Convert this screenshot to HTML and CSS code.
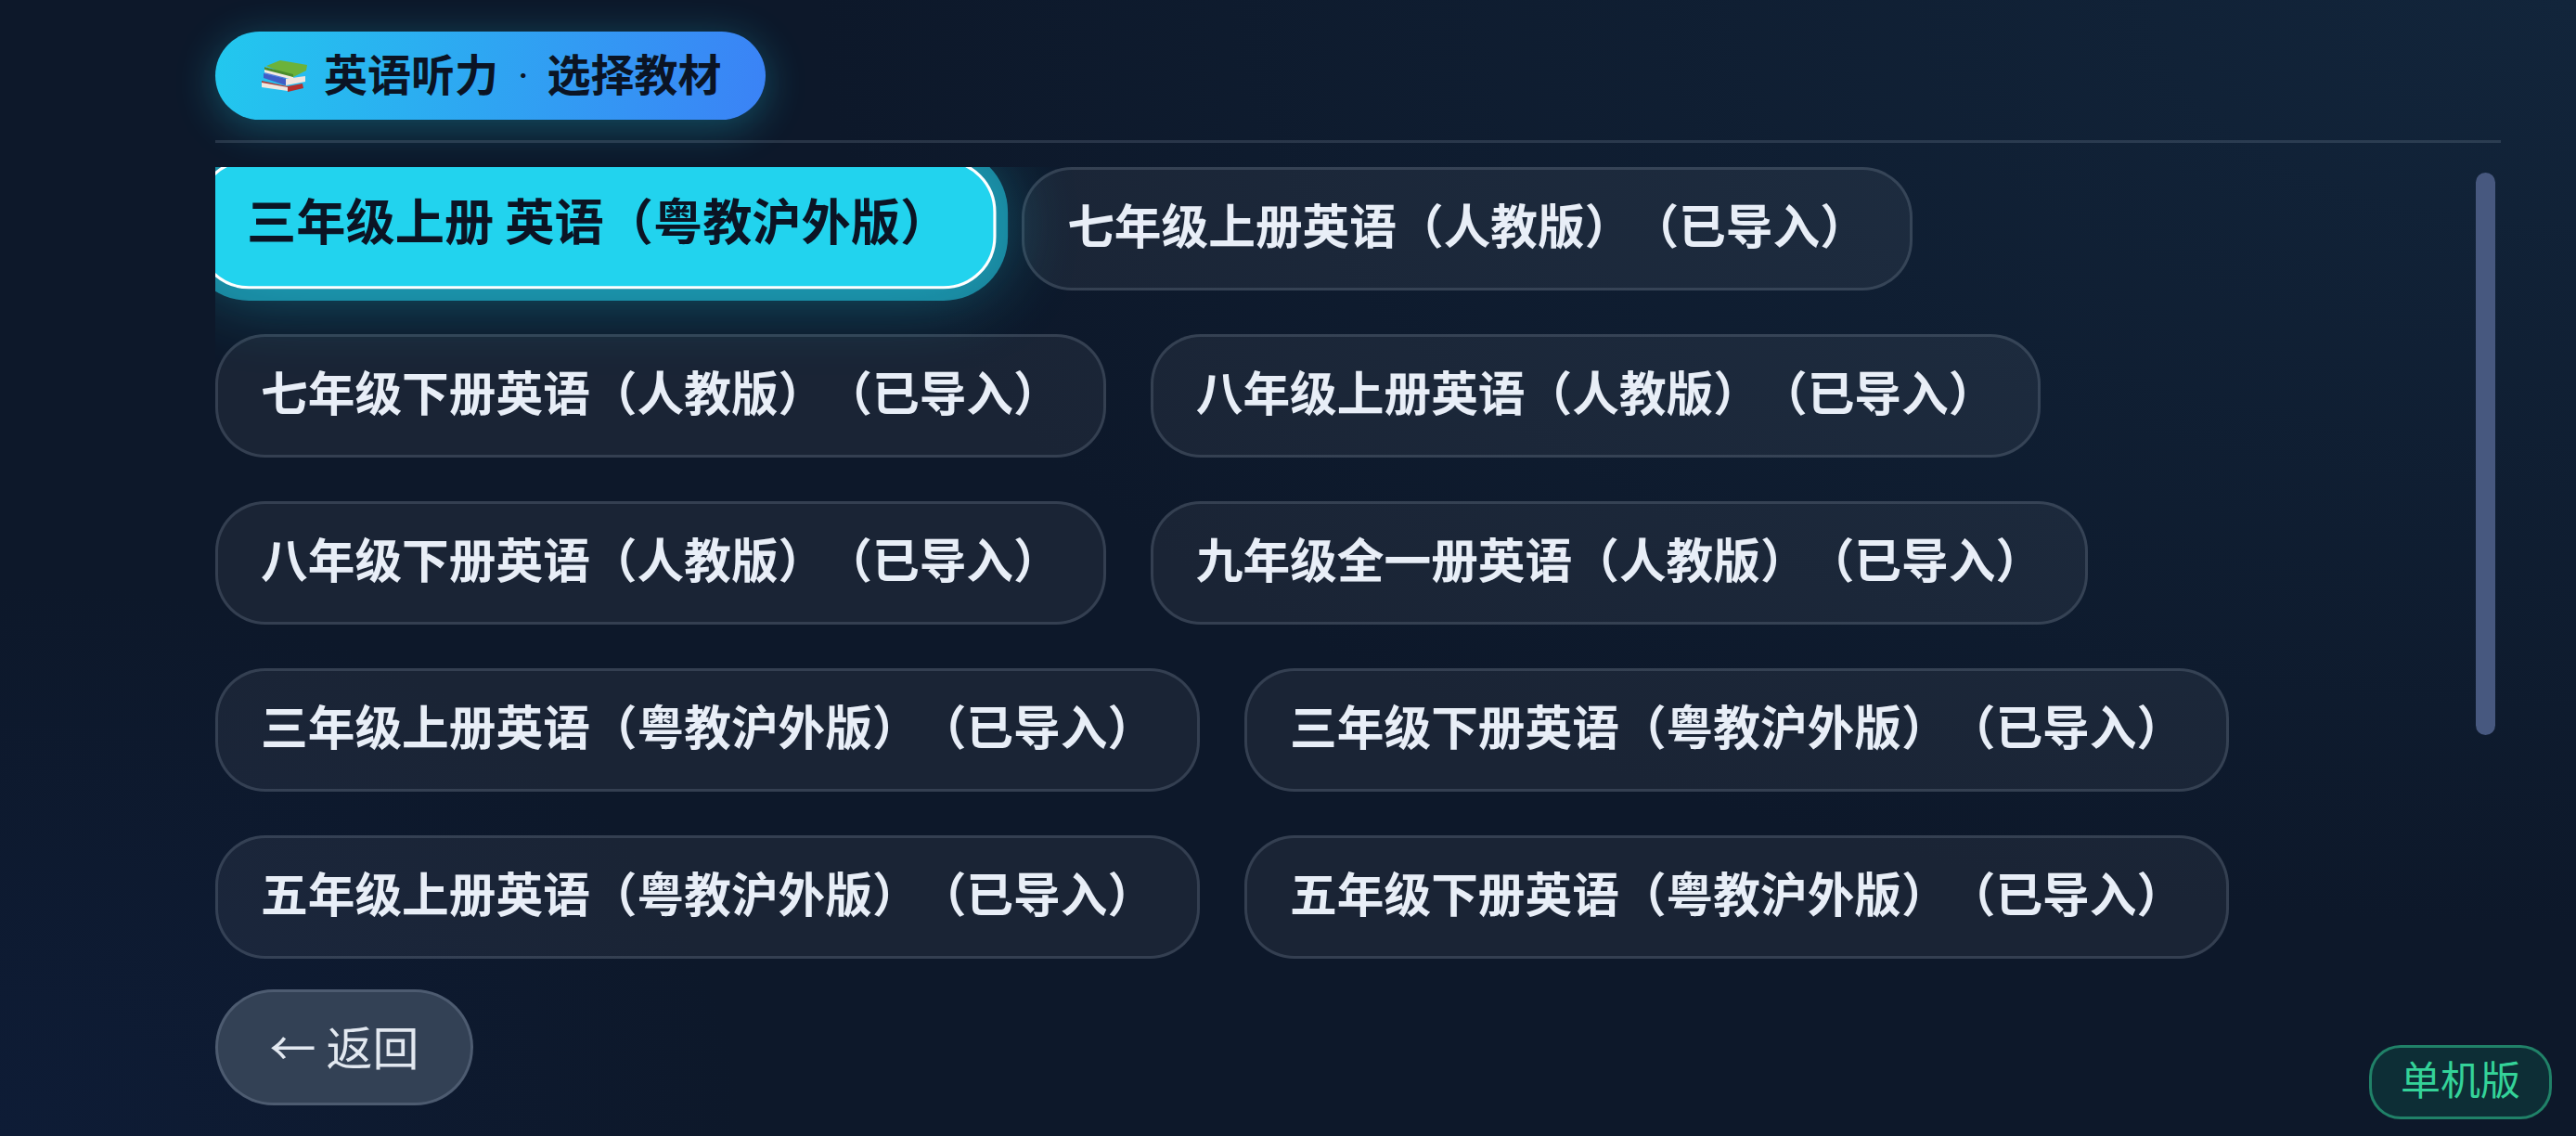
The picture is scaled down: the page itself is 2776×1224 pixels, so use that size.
FILE: index.html
```html
<!DOCTYPE html>
<html lang="zh-CN">
<head>
<meta charset="utf-8">
<title>英语听力</title>
<link rel="stylesheet" href="styles.css">
</head>
<body>
<main class="screen">
  <header class="head">
    <div class="title-pill">
      <svg class="books" viewBox="7 10 50 35" aria-hidden="true">
        <path d="M8 34l28 5 0 5-28-4z" fill="#efe7df"/>
        <path d="M8 33l28 6 0 1-28-5z" fill="#a8413c"/>
        <path d="M36 39l16-3 1 5-17 4z" fill="#b5302d"/>
        <path d="M33 31l22-3 0 6-21 4z" fill="#f0e6e0"/>
        <path d="M10 25l24 6 0 7-24-8z" fill="#3f5ec6"/>
        <path d="M10 25l8-2 16 4 0 4z" fill="#5b79dc"/>
        <path d="M11 18l31 9 0 5-31-8z" fill="#f1ebdf"/>
        <path d="M13 17l15-6 29 5-1 6-14 7z" fill="#6cb23a"/>
        <path d="M11 18l31 8 0 3-31-8z" fill="#4b8c2b"/>
      </svg>
      <span>英语听力 <span class="dot">·</span> 选择教材</span>
    </div>
  </header>
  <div class="rule"></div>
  <section class="list">
    <button class="book selected">三年级上册 英语（粤教沪外版）</button>
    <button class="book">七年级上册英语（人教版）（已导入）</button>
    <button class="book">七年级下册英语（人教版）（已导入）</button>
    <button class="book">八年级上册英语（人教版）（已导入）</button>
    <button class="book">八年级下册英语（人教版）（已导入）</button>
    <button class="book">九年级全一册英语（人教版）（已导入）</button>
    <button class="book">三年级上册英语（粤教沪外版）（已导入）</button>
    <button class="book">三年级下册英语（粤教沪外版）（已导入）</button>
    <button class="book">五年级上册英语（粤教沪外版）（已导入）</button>
    <button class="book">五年级下册英语（粤教沪外版）（已导入）</button>
    <div class="thumb"></div>
  </section>
  <button class="back">← 返回</button>
</main>
<div class="badge">单机版</div>
</body>
</html>
```
FILE: styles.css
```css
* { box-sizing: border-box; }
html, body { margin: 0; height: 100%; }
body {
  width: 2776px;
  height: 1224px;
  overflow: hidden;
  position: relative;
  font-family: "Noto Sans CJK SC", "Noto Sans", sans-serif;
  text-spacing-trim: space-all;
  background:
    radial-gradient(1900px 1000px at 100% 0%, #12253b 0%, rgba(18,37,59,0) 100%),
    radial-gradient(800px 600px at 0% 100%, #0e1c36 0%, rgba(14,28,54,0) 100%),
    #0d182a;
}
.screen {
  height: 1224px;
  padding: 34px 81px 0 232px;
  display: flex;
  flex-direction: column;
  align-items: stretch;
}
.head { display: flex; }
.title-pill {
  height: 95px;
  padding: 0 47px 9px 49px;
  display: flex;
  align-items: center;
  gap: 18px;
  border-radius: 48px;
  background: linear-gradient(100deg, #22c8ee 0%, #3b82f6 100%);
  box-shadow: 0 8px 44px rgba(34, 211, 238, 0.3);
  color: #0b1424;
  font-size: 47px;
  font-weight: 700;
  white-space: nowrap;
}
.dot { font-family: Roboto, sans-serif; font-weight: 400; margin: 0 9px 0 10px; }
.books { width: 50px; height: 35px; flex: none; margin-top: 9px; }
.rule {
  height: 3px;
  margin-top: 22px;
  background: rgba(148, 163, 184, 0.2);
}
.list {
  position: relative;
  height: 870px;
  margin-top: 26px;
  display: flex;
  flex-wrap: wrap;
  align-content: flex-start;
  gap: 47px 48px;
  padding-right: 80px;
  overflow: hidden;
}
.book {
  height: 133px;
  padding: 0 46px 12px;
  border: 3px solid rgba(148, 163, 184, 0.22);
  border-radius: 54px;
  background: rgba(255, 255, 255, 0.055);
  color: #e8eef7;
  font-family: inherit;
  font-size: 50.7px;
  font-weight: 700;
  white-space: nowrap;
}
.book.selected {
  padding: 0 45px 12px 49px;
  background: #22d3ee;
  color: #0b1424;
  border-color: #fff;
  transform: translateY(-5px) scale(1.05);
  box-shadow: 0 0 0 12px rgba(34, 211, 238, 0.55), 0 0 80px rgba(34, 211, 238, 0.45);
}
.thumb {
  position: absolute;
  top: 6px;
  right: 6px;
  width: 21px;
  height: 606px;
  border-radius: 11px;
  background: #47587f;
}
.back {
  align-self: flex-start;
  width: 278px;
  height: 125px;
  margin-top: 16px;
  padding: 0 0 6px;
  border: 3px solid rgba(148, 163, 184, 0.28);
  border-radius: 63px;
  background: #334155;
  color: #e2e8f0;
  font-family: inherit;
  font-size: 50px;
  font-weight: 400;
}
.badge {
  position: absolute;
  right: 26px;
  bottom: 18px;
  width: 197px;
  height: 80px;
  padding-bottom: 10px;
  display: flex;
  align-items: center;
  justify-content: center;
  border: 3px solid rgba(52, 211, 153, 0.5);
  border-radius: 34px;
  background: rgba(16, 185, 129, 0.14);
  color: #34d399;
  font-size: 43px;
}
```
